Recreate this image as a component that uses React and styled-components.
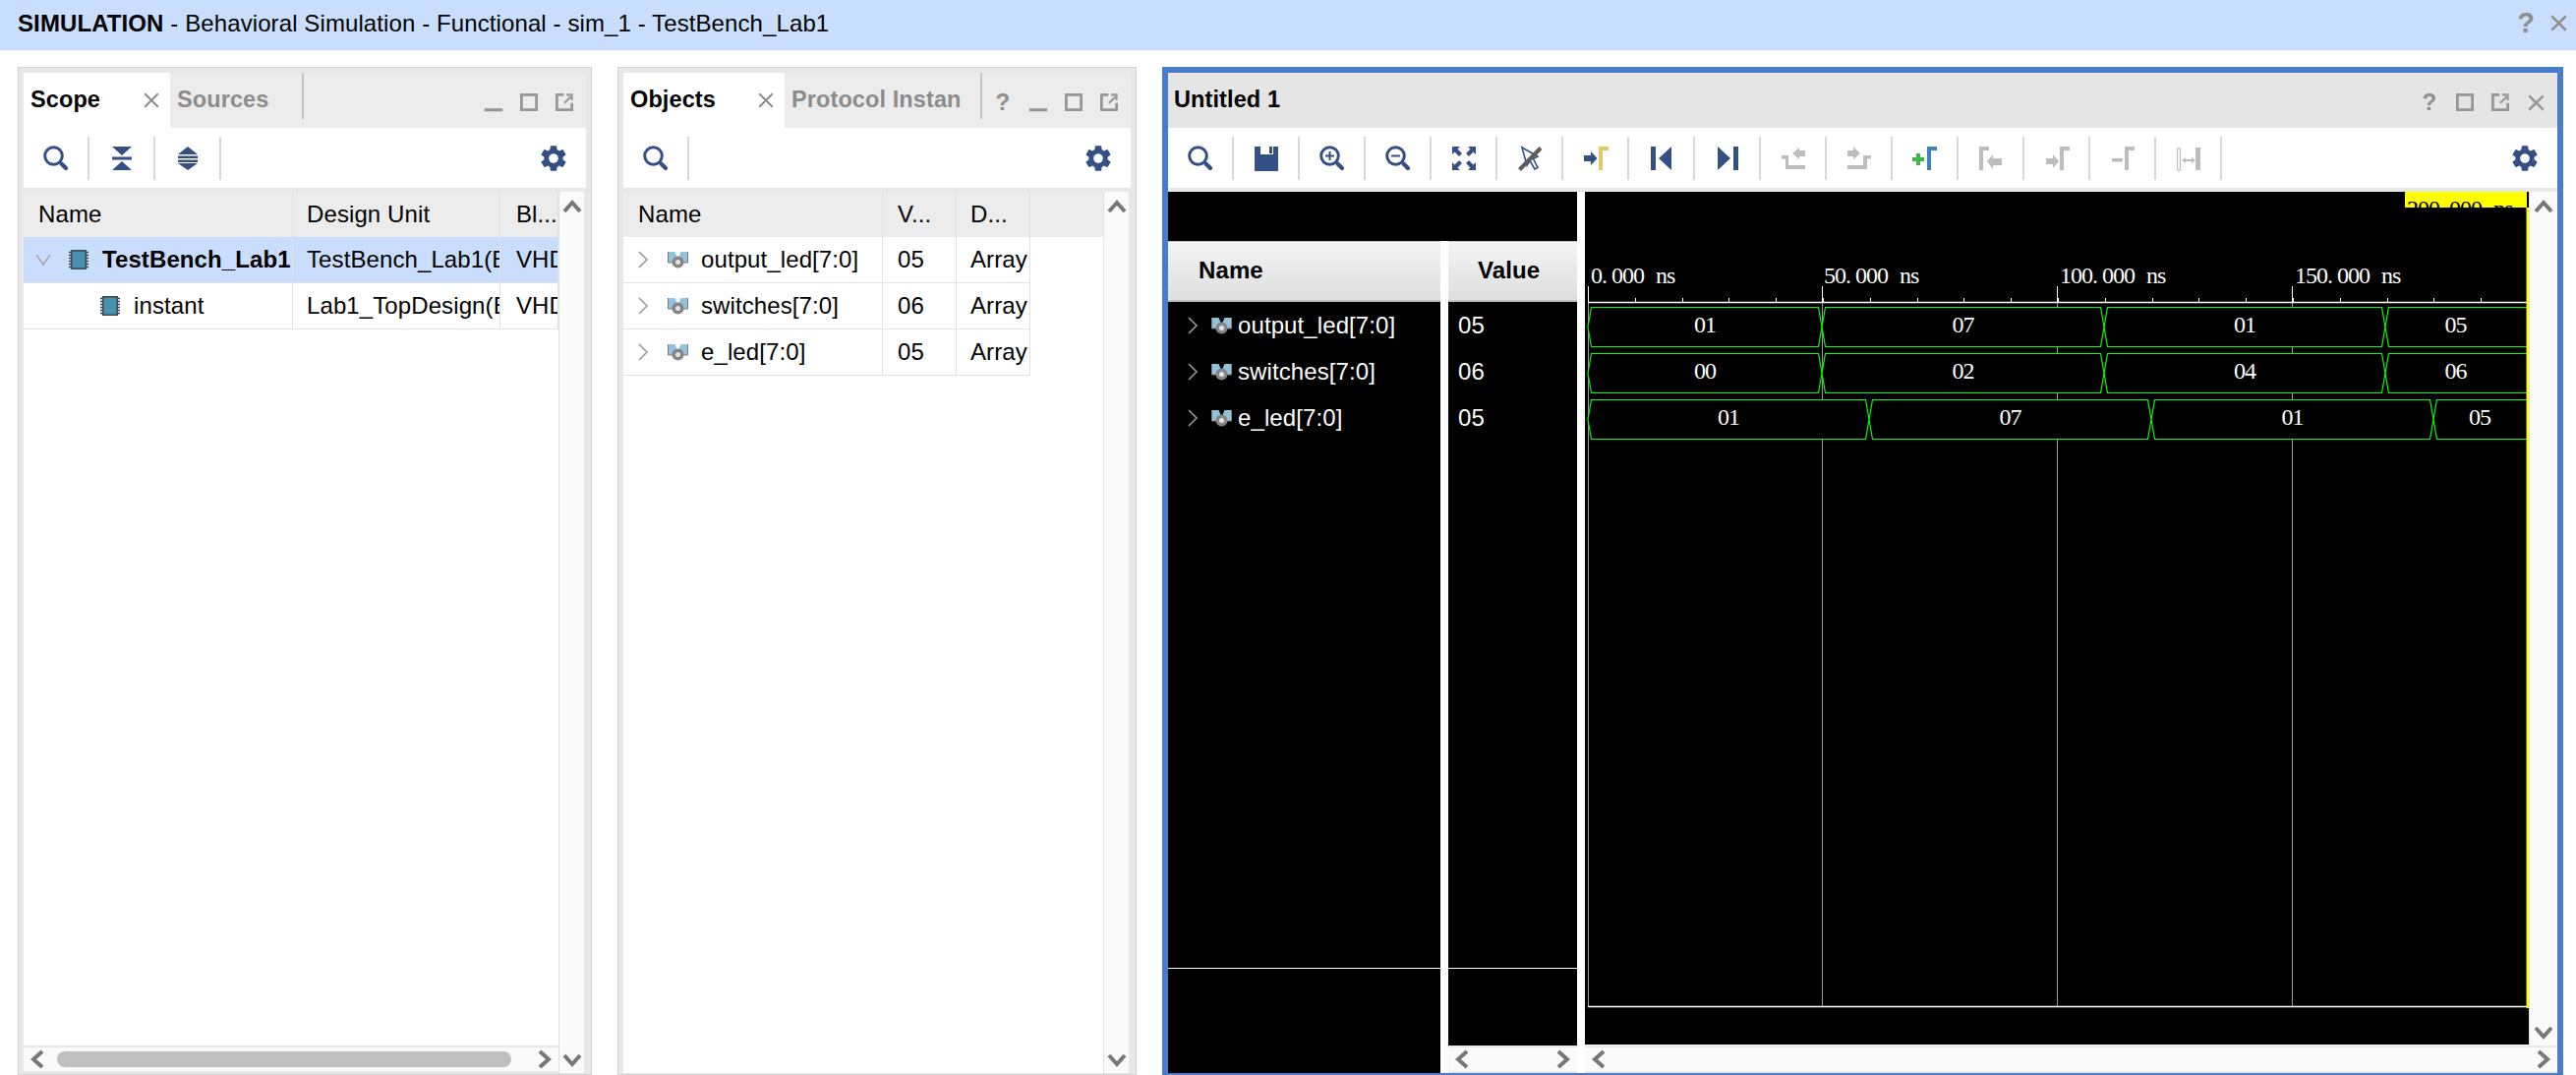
import React from 'react';
import styled, { createGlobalStyle } from 'styled-components';
import { MdSettings } from 'react-icons/md';

const GlobalStyle = createGlobalStyle`
	html, body {
		margin: 0;
		padding: 0;
		background: #fff;
	}
	body {
		font-family: 'Liberation Sans', Arial, sans-serif;
		font-size: 24px;
		letter-spacing: 0.1px;
		color: #000;
	}
`;

const Page = styled.div`
	width: 2620px;
	height: 1093px;
	display: flex;
	flex-direction: column;
	overflow: hidden;
`;

const TitleBar = styled.header`
	height: 51px;
	flex: none;
	box-sizing: border-box;
	display: flex;
	align-items: center;
	padding: 0 9px 4px 18px;
	background: #c9ddfc;
	white-space: pre;
	b {
		font-weight: 700;
	}
`;

const TitleActions = styled.div`
	margin-left: auto;
	display: flex;
	align-items: center;
	gap: 16px;
`;

const Help = styled.span`
	font-size: ${({ $size }) => $size || 24}px;
	font-weight: 700;
	color: #8e8e8e;
	line-height: 1;
`;

const Main = styled.main`
	flex: 1;
	min-height: 0;
	display: flex;
	gap: 26px;
	padding: 17px 13px 0 18px;
`;

const Panel = styled.section`
	width: ${({ $w }) => $w}px;
	flex: none;
	box-sizing: border-box;
	display: flex;
	flex-direction: column;
	border: 1px solid #d2d2d2;
	padding: 5px 5px 1px;
	background: #e8e8e8;
`;

const WavePanel = styled.section`
	flex: 1;
	min-width: 0;
	display: flex;
	flex-direction: column;
	border: solid #4a7ccd;
	border-width: 6px 6px 2px;
	background: #e8e8e8;
`;

const TabBar = styled.div`
	height: 56px;
	flex: none;
	display: flex;
	background: ${({ $bg }) => $bg || '#ececec'};
`;

const Tab = styled.div`
	width: ${({ $w }) => $w}px;
	flex: none;
	box-sizing: border-box;
	display: flex;
	align-items: center;
	justify-content: space-between;
	padding: 0 11px 1px 7px;
	font-weight: 700;
	font-size: 23.5px;
	overflow: hidden;
	white-space: nowrap;
	background: ${({ $active }) => ($active ? '#fff' : 'transparent')};
	color: ${({ $active }) => ($active ? '#000' : '#8c8c8c')};
`;

const PlainTitle = styled.div`
	display: flex;
	align-items: center;
	padding: 0 0 1px 6px;
	font-weight: 700;
	font-size: 23.5px;
`;

const TabDivider = styled.div`
	width: 2px;
	height: 47px;
	background: #c4c4c4;
`;

const WindowButtons = styled.div`
	margin-left: auto;
	display: flex;
	padding: 4px 4px 0 0;
`;

const WindowButton = styled.div`
	width: 36px;
	display: flex;
	align-items: center;
	justify-content: center;
`;

const Toolbar = styled.div`
	height: 61px;
	flex: none;
	display: flex;
	align-items: center;
	margin-bottom: 4px;
	background: #fff;
`;

const ToolButton = styled.div`
	width: 65px;
	height: 44px;
	flex: none;
	display: flex;
	align-items: center;
	justify-content: center;
`;

const ToolDivider = styled.div`
	width: 2px;
	height: 44px;
	flex: none;
	background: #d8d8d8;
`;

const GearButton = styled.div`
	margin-left: auto;
	margin-right: 17px;
	display: flex;
	color: #334f83;
`;

const Body = styled.div`
	flex: 1;
	min-height: 0;
	display: flex;
`;

const TableArea = styled.div`
	flex: 1;
	min-width: 0;
	display: flex;
	flex-direction: column;
	background: #fff;
`;

const Table = styled.div`
	flex: 1;
	min-height: 0;
	background: #fff;
`;

const Row = styled.div`
	height: ${({ $head }) => ($head ? 46 : 47)}px;
	box-sizing: border-box;
	display: flex;
	background: ${({ $head, $selected }) => ($head ? '#ececec' : $selected ? '#c9ddfc' : 'transparent')};
	border-bottom: ${({ $head }) => ($head ? 'none' : '1px solid #e4e4e4')};
	width: ${({ $w }) => ($w ? `${$w}px` : 'auto')};
`;

const Cell = styled.div`
	width: ${({ $w }) => $w}px;
	flex: none;
	box-sizing: border-box;
	display: flex;
	align-items: center;
	padding-left: ${({ $pad }) => $pad || 14}px;
	border-right: 1px solid #e2e2e2;
	font-weight: ${({ $bold }) => ($bold ? 700 : 400)};
	white-space: nowrap;
	overflow: hidden;
`;

const Spacer = styled.span`
	width: ${({ $w }) => $w}px;
	flex: none;
`;

const VScroll = styled.div`
	width: ${({ $w }) => $w || 25}px;
	flex: none;
	display: flex;
	flex-direction: column;
	align-items: center;
	justify-content: space-between;
	padding: 5px 0 3px;
	margin-right: ${({ $gap }) => $gap ?? 2}px;
	border-left: 1px solid #e2e2e2;
	background: #fafafa;
`;

const HScrollTrack = styled.div`
	height: 24px;
	box-sizing: border-box;
	display: flex;
	align-items: center;
	justify-content: space-between;
	padding: 0 4px;
	background: #fafafa;
`;

const HScrollBlock = styled.div`
	flex: none;
	padding: 2px 0;
	background: #e8e8e8;
`;

const Thumb = styled.div`
	flex: 1;
	height: 16px;
	margin: 0 24px 0 10px;
	border-radius: 8px;
	background: #bfbfbf;
`;

const WaveBody = styled.div`
	flex: 1;
	min-height: 0;
	display: flex;
	gap: 8px;
	background: #fff;
`;

const SignalGroup = styled.div`
	width: 416px;
	flex: none;
	display: flex;
	flex-direction: column;
`;

const GroupTop = styled.div`
	height: 50px;
	flex: none;
	background: #000;
`;

const GroupColumns = styled.div`
	flex: 1;
	min-height: 0;
	display: flex;
	gap: 8px;
`;

const SignalColumn = styled.div`
	width: ${({ $w }) => $w}px;
	flex: none;
	display: flex;
	flex-direction: column;
`;

const BlackColumn = styled.div`
	flex: 1;
	min-height: 0;
	display: flex;
	flex-direction: column;
	background: #000;
`;

const ColumnHead = styled.div`
	height: 62px;
	flex: none;
	box-sizing: border-box;
	display: flex;
	align-items: center;
	padding-left: ${({ $pad }) => $pad}px;
	padding-bottom: 1px;
	font-weight: 700;
	border-top: 1px solid #c8c8c8;
	border-bottom: 2px solid #c0c0c0;
	background: linear-gradient(#f4f4f4, #dedede);
`;

const SignalRow = styled.div`
	height: 47px;
	flex: none;
	display: flex;
	align-items: center;
	padding-left: ${({ $pad }) => $pad}px;
	color: #fff;
`;

const Grow = styled.div`
	flex: 1;
`;

const ColumnFooter = styled.div`
	height: ${({ $h }) => $h}px;
	flex: none;
	border-top: 1px solid #fff;
`;

const WaveColumn = styled.div`
	flex: 1;
	min-width: 0;
	display: flex;
	flex-direction: column;
`;

const WaveRow = styled.div`
	flex: 1;
	min-height: 0;
	display: flex;
`;

const WaveSvg = styled.svg`
	width: 960px;
	height: 867px;
	flex: none;
	display: block;
	background: #000;
	text {
		font-family: 'Liberation Serif', 'Times New Roman', serif;
		font-size: 24px;
		letter-spacing: -1px;
		fill: #fff;
	}
`;

const BLUE = '#334f83';
const GRAY = '#bdbdbd';
const WIN = '#969696';

const Icon = ({ children, size = 26 }) => (
	<svg width={size} height={size} viewBox='0 0 26 26'>
		{children}
	</svg>
);

const Lens = () => (
	<>
		<circle cx='10.5' cy='10.5' r='8.8' fill='none' stroke={BLUE} strokeWidth='3' />
		<path d='M18.5 18.5L23 23' stroke={BLUE} strokeWidth='4.2' strokeLinecap='round' />
	</>
);

const SearchIcon = () => <Icon><Lens /></Icon>;

const CollapseIcon = () => (
	<Icon>
		<path d='M3 1H23L13 10ZM3 11.5H23V14.5H3ZM13 16L23 25H3Z' fill={BLUE} />
	</Icon>
);

const ExpandIcon = () => (
	<Icon>
		<path d='M13 1L23 9H3ZM3 10.5H23V13H3ZM3 14.5H23V17H3ZM3 18H23L13 25Z' fill={BLUE} />
	</Icon>
);

const SaveIcon = () => (
	<Icon>
		<path d='M1 1H7V9H20V1H25V26H1ZM16 1H19V8H16Z' fill={BLUE} fillRule='evenodd' />
	</Icon>
);

const ZoomInIcon = () => (
	<Icon>
		<Lens />
		<path d='M10.5 6V15M6 10.5H15' stroke={BLUE} strokeWidth='2' />
	</Icon>
);

const ZoomOutIcon = () => (
	<Icon>
		<Lens />
		<path d='M6 10.5H15' stroke={BLUE} strokeWidth='2' />
	</Icon>
);

const FitIcon = () => {
	const arrow = 'M1 1H9L6.5 3.5L11 8L8 11L3.5 6.5L1 9Z';
	return (
		<Icon>
			<path d={arrow} fill={BLUE} />
			<path d={arrow} fill={BLUE} transform='matrix(-1 0 0 1 26 0)' />
			<path d={arrow} fill={BLUE} transform='matrix(1 0 0 -1 0 26)' />
			<path d={arrow} fill={BLUE} transform='matrix(-1 0 0 -1 26 26)' />
		</Icon>
	);
};

const SnapIcon = () => (
	<Icon>
		<path d='M5 2L10 20L13 15.5L18 24L21 22.5L16.5 13.5L21 11Z' fill='none' stroke={BLUE} strokeWidth='1.6' />
		<path d='M2.5 24.5L24 2.5' stroke='#5c5c5c' strokeWidth='4' />
	</Icon>
);

const Gamma = ({ x, color, y = 1, h = 24 }) => (
	<path d={`M${x} ${y}H${x + 10}V${y + 4}H${x + 4}V${y + h}H${x}Z`} fill={color} />
);

const GotoCursorIcon = () => (
	<Icon>
		<path d='M1 10H8V6L14.5 13L8 20V16H1Z' fill={BLUE} />
		<Gamma x={16} color='#e3c868' />
	</Icon>
);

const FirstIcon = () => (
	<Icon>
		<path d='M2 1H7V25H2ZM23 1V25L10 13Z' fill={BLUE} />
	</Icon>
);

const LastIcon = () => (
	<Icon>
		<path d='M3 1L16 13L3 25ZM19 1H24V25H19Z' fill={BLUE} />
	</Icon>
);

const PrevEdgeIcon = () => (
	<Icon>
		<path d='M1 10H8V20H25V24H5V13.5H1Z' fill={GRAY} />
		<path d='M12 8L19 2V5H25V11H19V14Z' fill={GRAY} />
	</Icon>
);

const NextEdgeIcon = () => (
	<Icon>
		<path d='M1 20H17V10H25V13.5H21V24H1Z' fill={GRAY} />
		<path d='M1 5H7V1L14 8L7 14V11H1Z' fill={GRAY} />
	</Icon>
);

const AddMarkerIcon = () => (
	<Icon>
		<path d='M4 8H8V12H12V16H8V20H4V16H0V12H4Z' fill='#3fb54a' />
		<Gamma x={15} color='#3f84b8' />
	</Icon>
);

const PrevMarkerIcon = () => (
	<Icon>
		<Gamma x={1} color={GRAY} />
		<path d='M9 16L15 9V13H24V20H15V24Z' fill={GRAY} />
	</Icon>
);

const NextMarkerIcon = () => (
	<Icon>
		<path d='M2 13H9V9L15 16L9 23V19H2Z' fill={GRAY} />
		<Gamma x={16} color={GRAY} />
	</Icon>
);

const RemoveMarkerIcon = () => (
	<Icon>
		<path d='M2 13H13V16.5H2Z' fill={GRAY} />
		<Gamma x={15} color={GRAY} />
	</Icon>
);

const SwapIcon = () => (
	<Icon>
		<rect x='1.5' y='3' width='3' height='22' fill='none' stroke={GRAY} strokeWidth='1.2' />
		<path d='M20 2H25V25H20ZM6 15L10 12V14H16V12L20 15L16 18V16H10V18Z' fill={GRAY} />
	</Icon>
);

const MinimizeIcon = () => (
	<Icon size={20}>
		<path d='M1 21H25V25H1Z' fill={WIN} />
	</Icon>
);

const MaximizeIcon = () => (
	<Icon size={18}>
		<rect x='2' y='2' width='22' height='22' fill='none' stroke={WIN} strokeWidth='4' />
	</Icon>
);

const FloatIcon = () => (
	<Icon size={18}>
		<path d='M12 2H2V24H24V14' fill='none' stroke={WIN} strokeWidth='4' />
		<path d='M13 14L22 5M16 2H24V10' fill='none' stroke={WIN} strokeWidth='3' />
	</Icon>
);

const CloseIcon = ({ size = 16, color = '#8a8a8a', weight = 3 }) => (
	<Icon size={size}>
		<path d='M2 2L24 24M24 2L2 24' stroke={color} strokeWidth={weight} />
	</Icon>
);

const ScrollArrow = ({ dir }) => {
	const turn = { up: 0, down: 180, left: -90, right: 90 }[dir];
	return (
		<svg width='20' height='20' viewBox='0 0 20 20' style={{ transform: `rotate(${turn}deg)` }}>
			<path d='M2 15L10 6L18 15' fill='none' stroke='#777' strokeWidth='4' />
		</svg>
	);
};

const TreeChevron = ({ open }) =>
	open ? (
		<svg width='16' height='18' viewBox='0 0 16 18'>
			<path d='M1 4L8 14L15 4' fill='none' stroke='#a8a8a8' strokeWidth='1.6' />
		</svg>
	) : (
		<svg width='12' height='18' viewBox='0 0 12 18'>
			<path d='M2 1L10 9L2 17' fill='none' stroke='#999' strokeWidth='1.6' />
		</svg>
	);

const ChipIcon = () => (
	<svg width='20' height='20' viewBox='0 0 20 20'>
		<path d='M0 2.5H3M0 5.5H3M0 8.5H3M0 11.5H3M0 14.5H3M0 17.5H3M17 2.5H20M17 5.5H20M17 8.5H20M17 11.5H20M17 14.5H20M17 17.5H20' stroke='#444' strokeWidth='1.3' />
		<rect x='2.8' y='0.8' width='14.4' height='18.4' fill='#4a90b0' stroke='#3d4b55' strokeWidth='1.6' />
	</svg>
);

const SignalIcon = () => (
	<svg width='21' height='18' viewBox='0 0 21 18'>
		<path d='M0 1H7.5L10.5 8L7 12H0ZM21 1H13.5L10.5 8L14 12H21Z' fill='#93c3dc' />
		<path d='M0.5 1V12H5M20.5 1V12H16' fill='none' stroke='#7d7d7d' strokeWidth='1' />
		<circle cx='10.5' cy='11.5' r='6' fill='#858585' />
		<circle cx='10.5' cy='11.5' r='2.5' fill='#e4e4e4' />
	</svg>
);

const Gear = () => (
	<GearButton>
		<MdSettings size={32} />
	</GearButton>
);

const Tools = ({ items }) => (
	<Toolbar>
		{items.map((Item, i) => (
			<React.Fragment key={i}>
				<ToolButton>
					<Item />
				</ToolButton>
				<ToolDivider />
			</React.Fragment>
		))}
		<Gear />
	</Toolbar>
);

const waveTools = [
	SearchIcon,
	SaveIcon,
	ZoomInIcon,
	ZoomOutIcon,
	FitIcon,
	SnapIcon,
	GotoCursorIcon,
	FirstIcon,
	LastIcon,
	PrevEdgeIcon,
	NextEdgeIcon,
	AddMarkerIcon,
	PrevMarkerIcon,
	NextMarkerIcon,
	RemoveMarkerIcon,
	SwapIcon,
];

const signals = [
	{ name: 'output_led[7:0]', value: '05' },
	{ name: 'switches[7:0]', value: '06' },
	{ name: 'e_led[7:0]', value: '05' },
];

const NS_0 = 1615;
const PX_PER_TICK = 47.8;
const WAVE_END = 2580;

const waves = [
	{ edges: [NS_0, 1853, 2140, 2426, WAVE_END], labels: ['01', '07', '01', '05'] },
	{ edges: [NS_0, 1853, 2140, 2426, WAVE_END], labels: ['00', '02', '04', '06'] },
	{ edges: [NS_0, 1901, 2188, 2475, WAVE_END], labels: ['01', '07', '01', '05'] },
];

const TimeLabel = ({ x, y = 288, whole, color }) => (
	<text x={x} y={y} style={color ? { fill: color } : undefined}>
		{whole}
		<tspan>.</tspan>
		<tspan dx='5'>000</tspan>
		<tspan dx='12'>ns</tspan>
	</text>
);

const WaveChart = () => {
	const majors = [NS_0, 1853, 2092, 2331];
	const minors = Array.from({ length: 20 }, (_, i) => NS_0 + PX_PER_TICK * i);
	return (
		<WaveSvg viewBox='1612 195 960 867'>
			<rect x='2446' y='195' width='124' height='16' fill='#ffff00' />
			<TimeLabel x='2448' y='220' whole='200' color='#000' />
			<rect x='2440' y='211' width='132' height='14' fill='#000' />
			{majors.map((x) => (
				<path key={x} d={`M${x + 0.5} 291V1023`} stroke='#9a9a9a' strokeWidth='1' />
			))}
			{majors.map((x) => (
				<path key={x} d={`M${x + 0.5} 291V307`} stroke='#fff' strokeWidth='1' />
			))}
			{minors.map((x) => (
				<path key={x} d={`M${Math.round(x) + 0.5} 303V307`} stroke='#fff' strokeWidth='1' />
			))}
			<path d='M1615 307.5H2570M1615 1023.5H2570' stroke='#fff' strokeWidth='1.4' />
			<TimeLabel x='1618' whole='0' />
			<TimeLabel x='1855' whole='50' />
			<TimeLabel x='2095' whole='100' />
			<TimeLabel x='2334' whole='150' />
			{waves.map((wave, r) => {
				const top = 312.5 + r * 47;
				const bottom = top + 40;
				const mid = top + 20;
				return wave.labels.map((label, i) => {
					const a = wave.edges[i];
					const b = wave.edges[i + 1];
					const shownEnd = Math.min(b, 2569);
					return (
						<g key={`${r}-${i}`}>
							<polygon
								points={`${a},${mid} ${a + 3.5},${top} ${b - 3.5},${top} ${b},${mid} ${b - 3.5},${bottom} ${a + 3.5},${bottom}`}
								fill='#000'
								stroke='#00ff00'
								strokeWidth='1.2'
							/>
							<text x={(a + shownEnd) / 2} y={top + 25} textAnchor='middle'>
								{label}
							</text>
						</g>
					);
				});
			})}
			<rect x='2569.5' y='211' width='2.5' height='814' fill='#ffff00' />
			<rect x='2570' y='195' width='2' height='16' fill='#000' />
			<rect x='2569' y='1025' width='3' height='37' fill='#000' />
		</WaveSvg>
	);
};

const ScopePanel = () => (
	<Panel $w={584}>
		<TabBar>
			<Tab $active $w={149}>
				Scope
				<CloseIcon />
			</Tab>
			<Tab $w={134}>Sources</Tab>
			<TabDivider />
			<WindowButtons>
				<WindowButton><MinimizeIcon /></WindowButton>
				<WindowButton><MaximizeIcon /></WindowButton>
				<WindowButton><FloatIcon /></WindowButton>
			</WindowButtons>
		</TabBar>
		<Tools items={[SearchIcon, CollapseIcon, ExpandIcon]} />
		<Body>
			<TableArea>
				<Table>
					<Row $head>
						<Cell $w={274} $pad={15}>Name</Cell>
						<Cell $w={211}>Design Unit</Cell>
						<Cell $w={59} $pad={16}>Bl...</Cell>
					</Row>
					<Row $selected>
						<Cell $w={274} $pad={12} $bold>
							<TreeChevron open />
							<Spacer $w={18} />
							<ChipIcon />
							<Spacer $w={14} />
							TestBench_Lab1
						</Cell>
						<Cell $w={211}>TestBench_Lab1(B</Cell>
						<Cell $w={59} $pad={16}>VHDL</Cell>
					</Row>
					<Row>
						<Cell $w={274} $pad={78}>
							<ChipIcon />
							<Spacer $w={14} />
							instant
						</Cell>
						<Cell $w={211}>Lab1_TopDesign(B</Cell>
						<Cell $w={59} $pad={16}>VHDL</Cell>
					</Row>
				</Table>
				<HScrollBlock>
					<HScrollTrack>
						<ScrollArrow dir='left' />
						<Thumb />
						<ScrollArrow dir='right' />
					</HScrollTrack>
				</HScrollBlock>
			</TableArea>
			<VScroll>
				<ScrollArrow dir='up' />
				<ScrollArrow dir='down' />
			</VScroll>
		</Body>
	</Panel>
);

const ObjectsPanel = () => (
	<Panel $w={528}>
		<TabBar>
			<Tab $active $w={164}>
				Objects
				<CloseIcon />
			</Tab>
			<Tab $w={199}>Protocol Instan</Tab>
			<TabDivider />
			<WindowButtons>
				<WindowButton><Help>?</Help></WindowButton>
				<WindowButton><MinimizeIcon /></WindowButton>
				<WindowButton><MaximizeIcon /></WindowButton>
				<WindowButton><FloatIcon /></WindowButton>
			</WindowButtons>
		</TabBar>
		<Tools items={[SearchIcon]} />
		<Body>
			<TableArea>
				<Table>
					<Row $head>
						<Cell $w={264} $pad={15}>Name</Cell>
						<Cell $w={75} $pad={15}>V...</Cell>
						<Cell $w={75}>D...</Cell>
					</Row>
					{signals.map((s) => (
						<Row key={s.name} $w={414}>
							<Cell $w={264}>
								<TreeChevron />
								<Spacer $w={19} />
								<SignalIcon />
								<Spacer $w={13} />
								{s.name}
							</Cell>
							<Cell $w={75} $pad={15}>{s.value}</Cell>
							<Cell $w={75}>Array</Cell>
						</Row>
					))}
				</Table>
			</TableArea>
			<VScroll>
				<ScrollArrow dir='up' />
				<ScrollArrow dir='down' />
			</VScroll>
		</Body>
	</Panel>
);

const WaveformPanel = () => (
	<WavePanel>
		<TabBar $bg='#e5e5e5'>
			<PlainTitle>Untitled 1</PlainTitle>
			<WindowButtons>
				<WindowButton><Help>?</Help></WindowButton>
				<WindowButton><MaximizeIcon /></WindowButton>
				<WindowButton><FloatIcon /></WindowButton>
				<WindowButton><CloseIcon size={17} color='#969696' weight={4} /></WindowButton>
			</WindowButtons>
		</TabBar>
		<Tools items={waveTools} />
		<WaveBody>
			<SignalGroup>
				<GroupTop />
				<GroupColumns>
					<SignalColumn $w={277}>
						<BlackColumn>
							<ColumnHead $pad={31}>Name</ColumnHead>
							{signals.map((s) => (
								<SignalRow key={s.name} $pad={19}>
									<TreeChevron />
									<Spacer $w={13} />
									<SignalIcon />
									<Spacer $w={6} />
									{s.name}
								</SignalRow>
							))}
							<Grow />
							<ColumnFooter $h={106} />
						</BlackColumn>
					</SignalColumn>
					<SignalColumn $w={131}>
						<BlackColumn>
							<ColumnHead $pad={30}>Value</ColumnHead>
							{signals.map((s) => (
								<SignalRow key={s.name} $pad={10}>{s.value}</SignalRow>
							))}
							<Grow />
							<ColumnFooter $h={78} />
						</BlackColumn>
						<HScrollBlock>
							<HScrollTrack>
								<ScrollArrow dir='left' />
								<ScrollArrow dir='right' />
							</HScrollTrack>
						</HScrollBlock>
					</SignalColumn>
				</GroupColumns>
			</SignalGroup>
			<WaveColumn>
				<WaveRow>
					<WaveChart />
					<VScroll $w={28} $gap={0}>
						<ScrollArrow dir='up' />
						<ScrollArrow dir='down' />
					</VScroll>
				</WaveRow>
				<HScrollBlock>
					<HScrollTrack>
						<ScrollArrow dir='left' />
						<ScrollArrow dir='right' />
					</HScrollTrack>
				</HScrollBlock>
			</WaveColumn>
		</WaveBody>
	</WavePanel>
);

const App = () => (
	<Page>
		<GlobalStyle />
		<TitleBar>
			<b>SIMULATION</b> - Behavioral Simulation - Functional - sim_1 - TestBench_Lab1
			<TitleActions>
				<Help $size={29}>?</Help>
				<CloseIcon size={17} color='#8e8e8e' weight={4} />
			</TitleActions>
		</TitleBar>
		<Main>
			<ScopePanel />
			<ObjectsPanel />
			<WaveformPanel />
		</Main>
	</Page>
);

export default App;
